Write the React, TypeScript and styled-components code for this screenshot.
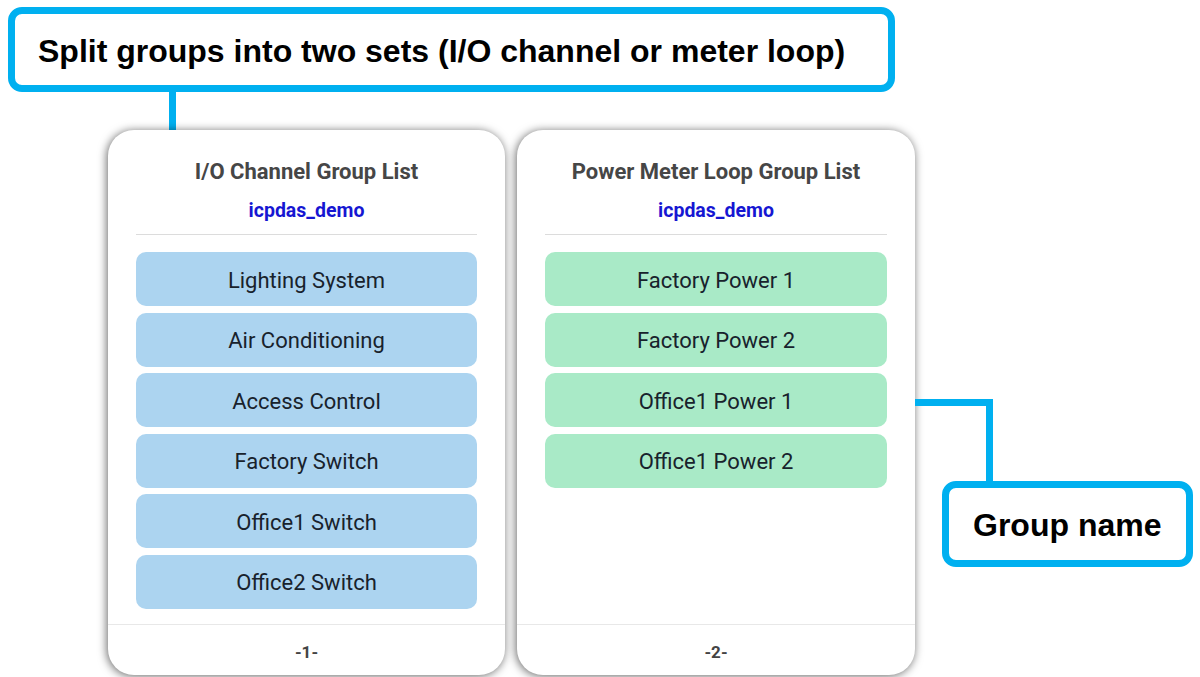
import React from "react";
import styled, { createGlobalStyle } from "styled-components";

const CYAN = "#00b0f0";

const GlobalStyle = createGlobalStyle`
  html, body {
    margin: 0;
    padding: 0;
    background: #ffffff;
  }
  * {
    box-sizing: border-box;
  }
`;

const Page = styled.div`
  width: 1200px;
  height: 677px;
  overflow: hidden;
  display: flex;
  flex-direction: column;
  background: #ffffff;
`;

const Callout = styled.div<{ $width: number; $left: number }>`
  width: ${(p) => p.$width}px;
  height: 85px;
  margin-left: ${(p) => p.$left}px;
  border: 7px solid ${CYAN};
  border-radius: 14px;
  background: #ffffff;
  display: flex;
  align-items: center;
  padding-left: 23px;
  padding-top: 3px;
  font-family: "Liberation Sans", Arial, sans-serif;
  font-weight: 700;
  font-size: 32px;
  color: #000000;
  white-space: nowrap;
`;

const TopCallout = styled(Callout)`
  margin-top: 7px;
`;

const Stub = styled.div`
  width: 7px;
  height: 38px;
  margin-left: 169px;
  background: ${CYAN};
`;

const Row = styled.div`
  display: flex;
  align-items: flex-start;
  padding-left: 108px;
`;

const Cards = styled.div`
  display: flex;
  gap: 12px;
`;

const Card = styled.div<{ $width: number }>`
  width: ${(p) => p.$width}px;
  height: 545px;
  background: #ffffff;
  border-radius: 26px;
  box-shadow: -1px 1px 10px rgba(0, 0, 0, 0.6);
  display: flex;
  flex-direction: column;
  font-family: Roboto, "Noto Sans", sans-serif;
  overflow: hidden;
`;

const CardHead = styled.div`
  padding: 30px 28px 0;
  display: flex;
  flex-direction: column;
  align-items: center;
`;

const Title = styled.div`
  font-size: 22px;
  line-height: 24px;
  font-weight: 700;
  color: #464646;
`;

const Owner = styled.div`
  margin-top: 16px;
  font-size: 19.5px;
  line-height: 22px;
  font-weight: 700;
  color: #1616d2;
`;

const Divider = styled.div`
  align-self: stretch;
  margin-top: 12px;
  height: 1px;
  background: #dcdcdc;
`;

const List = styled.div`
  margin-top: 17px;
  padding: 0 28px;
  display: flex;
  flex-direction: column;
  gap: 6.6px;
`;

const Item = styled.div<{ $tone: "blue" | "green" }>`
  height: 54px;
  border-radius: 10px;
  background: ${(p) => (p.$tone === "blue" ? "#acd4f0" : "#a9eac7")};
  display: flex;
  align-items: center;
  justify-content: center;
  padding-top: 2px;
  font-size: 22px;
  color: #18222c;
`;

const Footer = styled.div`
  margin-top: auto;
  height: 51px;
  border-top: 1px solid #e8e8e8;
  display: flex;
  align-items: center;
  justify-content: center;
  padding-top: 3px;
  font-size: 17px;
  font-weight: 700;
  color: #444444;
`;

const Annotation = styled.div`
  padding-top: 269px;
  display: flex;
  flex-direction: column;
`;

const Elbow = styled.div`
  width: 78px;
  height: 82px;
  border-top: 7px solid ${CYAN};
  border-right: 7px solid ${CYAN};
`;

const SideCallout = styled(Callout)`
  height: 86px;
  padding-left: 24px;
`;

interface GroupCardProps {
  title: string;
  page: number;
  width: number;
  tone: "blue" | "green";
  groups: string[];
}

function GroupCard({ title, page, width, tone, groups }: GroupCardProps) {
  return (
    <Card $width={width}>
      <CardHead>
        <Title>{title}</Title>
        <Owner>icpdas_demo</Owner>
        <Divider />
      </CardHead>
      <List>
        {groups.map((g) => (
          <Item key={g} $tone={tone}>
            {g}
          </Item>
        ))}
      </List>
      <Footer>-{page}-</Footer>
    </Card>
  );
}

const ioGroups = [
  "Lighting System",
  "Air Conditioning",
  "Access Control",
  "Factory Switch",
  "Office1 Switch",
  "Office2 Switch",
];

const meterGroups = [
  "Factory Power 1",
  "Factory Power 2",
  "Office1 Power 1",
  "Office1 Power 2",
];

export default function App() {
  return (
    <>
      <GlobalStyle />
      <Page>
        <TopCallout $width={887} $left={8}>
          Split groups into two sets (I/O channel or meter loop)
        </TopCallout>
        <Stub />
        <Row>
          <Cards>
            <GroupCard
              title="I/O Channel Group List"
              page={1}
              width={397}
              tone="blue"
              groups={ioGroups}
            />
            <GroupCard
              title="Power Meter Loop Group List"
              page={2}
              width={398}
              tone="green"
              groups={meterGroups}
            />
          </Cards>
          <Annotation>
            <Elbow />
            <SideCallout $width={251} $left={27}>
              Group name
            </SideCallout>
          </Annotation>
        </Row>
      </Page>
    </>
  );
}
